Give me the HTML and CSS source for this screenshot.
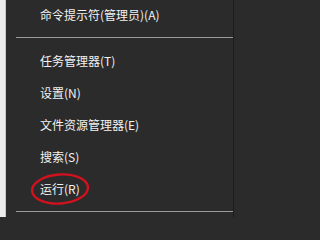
FILE: index.html
```html
<!DOCTYPE html>
<html lang="zh-CN">
<head>
<meta charset="utf-8">
<title>菜单</title>
<link rel="stylesheet" href="styles.css">
</head>
<body>
<div class="screen">
  <div class="strip"></div>
  <div class="menu">
    <div class="item first">命令提示符(管理员)(A)</div>
    <div class="sep"></div>
    <div class="item">任务管理器(T)</div>
    <div class="item">设置(N)</div>
    <div class="item">文件资源管理器(E)</div>
    <div class="item">搜索(S)</div>
    <div class="item run">运行(R)
      <svg class="circle" width="62" height="34" viewBox="0 0 62 34"><ellipse cx="31" cy="17" rx="28" ry="14.5" fill="none" stroke="#d0121e" stroke-width="2.4" transform="rotate(-4 31 17)"/></svg>
    </div>
    <div class="sep last"></div>
  </div>
  <div class="edge"></div>
</div>
</body>
</html>
```
FILE: styles.css
```css
html, body {
  margin: 0;
  padding: 0;
  background: #2b2b2b;
}
.screen {
  display: flex;
  width: 239px;
  height: 217px;
  overflow: hidden;
  font-family: "Noto Sans CJK SC", "Noto Sans", sans-serif;
}
.strip {
  width: 5px;
  flex: none;
  background: #ececec;
  border-right: 1px solid #c8c8c8;
}
.menu {
  flex: 1;
  background: #2b2b2b;
  display: flex;
  flex-direction: column;
}
.edge {
  width: 5px;
  flex: none;
  background: #2b2b2b;
  border-left: 1px solid #1c1c1c;
}
.item {
  position: relative;
  height: 32px;
  line-height: 32px;
  padding-left: 34px;
  font-size: 12px;
  color: #f2f2f2;
  white-space: nowrap;
}
.item.first {
  height: 30px;
  line-height: 30px;
}
.sep {
  height: 1px;
  background: #9a9a9a;
  margin: 7px 0 7px 10px;
  flex: none;
}
.sep.last {
  margin-top: 6px;
}
.circle {
  position: absolute;
  left: 23px;
  top: -1px;
}
```
